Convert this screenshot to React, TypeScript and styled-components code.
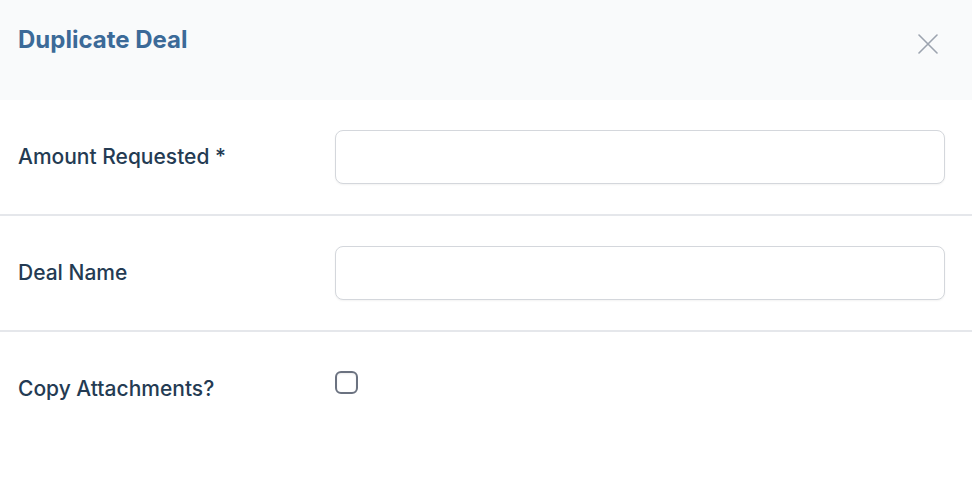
import React from "react";
import styled, { createGlobalStyle } from "styled-components";

const Global = createGlobalStyle`
  html, body { margin: 0; padding: 0; background: #ffffff; }
  body { font-family: Inter, "Noto Sans", sans-serif; }
  * { box-sizing: border-box; }
`;

const Modal = styled.div`
  width: 972px;
  background: #ffffff;
`;

const Header = styled.div`
  height: 100px;
  background: #f9fafb;
  display: flex;
  align-items: flex-start;
  justify-content: space-between;
  padding: 24px 34px 0 18px;
`;

const Title = styled.h2`
  margin: 0;
  font-size: 24px;
  line-height: 32px;
  font-weight: 700;
  color: #3c6a98;
`;

const CloseButton = styled.button`
  border: none;
  background: transparent;
  padding: 0;
  margin-top: 10px;
  width: 20px;
  height: 20px;
  display: flex;
  align-items: center;
  justify-content: center;
  cursor: pointer;
  color: #9ca3af;
`;

const Row = styled.div<{ $last?: boolean }>`
  display: grid;
  grid-template-columns: 317px 1fr;
  align-items: ${(p) => (p.$last ? "start" : "center")};
  padding: ${(p) => (p.$last ? "39px 27px 0 18px" : "30px 27px 30px 18px")};
  border-bottom: ${(p) => (p.$last ? "none" : "2px solid #e5e7eb")};
  min-height: ${(p) => (p.$last ? "165px" : "auto")};
`;

const Label = styled.label<{ $offset?: number }>`
  font-size: 21px;
  line-height: 24px;
  font-weight: 500;
  color: #243b53;
  padding-top: ${(p) => p.$offset ?? 0}px;
`;

const Input = styled.input`
  width: 100%;
  height: 54px;
  border: 1.5px solid #d4d7dc;
  border-radius: 8px;
  background: #fff;
  box-shadow: 0 1px 2px rgba(0, 0, 0, 0.05);
  outline: none;
  font-family: inherit;
  font-size: 16px;
  padding: 0 14px;
`;

const Checkbox = styled.input`
  appearance: none;
  margin: 0;
  width: 23px;
  height: 23px;
  border: 2px solid #6b7280;
  border-radius: 6px;
  background: #fff;
  box-shadow: inset 0 1px 2px rgba(0, 0, 0, 0.08);
`;

export default function App() {
  return (
    <>
      <Global />
      <Modal>
        <Header>
          <Title>Duplicate Deal</Title>
          <CloseButton aria-label="Close">
            <svg width="20" height="20" viewBox="0 0 20 20" fill="none">
              <path d="M1 1L19 19M19 1L1 19" stroke="currentColor" strokeWidth="1.6" strokeLinecap="round" />
            </svg>
          </CloseButton>
        </Header>
        <Row>
          <Label>Amount Requested *</Label>
          <Input type="text" />
        </Row>
        <Row>
          <Label>Deal Name</Label>
          <Input type="text" />
        </Row>
        <Row $last>
          <Label $offset={6}>Copy Attachments?</Label>
          <Checkbox type="checkbox" />
        </Row>
      </Modal>
    </>
  );
}
